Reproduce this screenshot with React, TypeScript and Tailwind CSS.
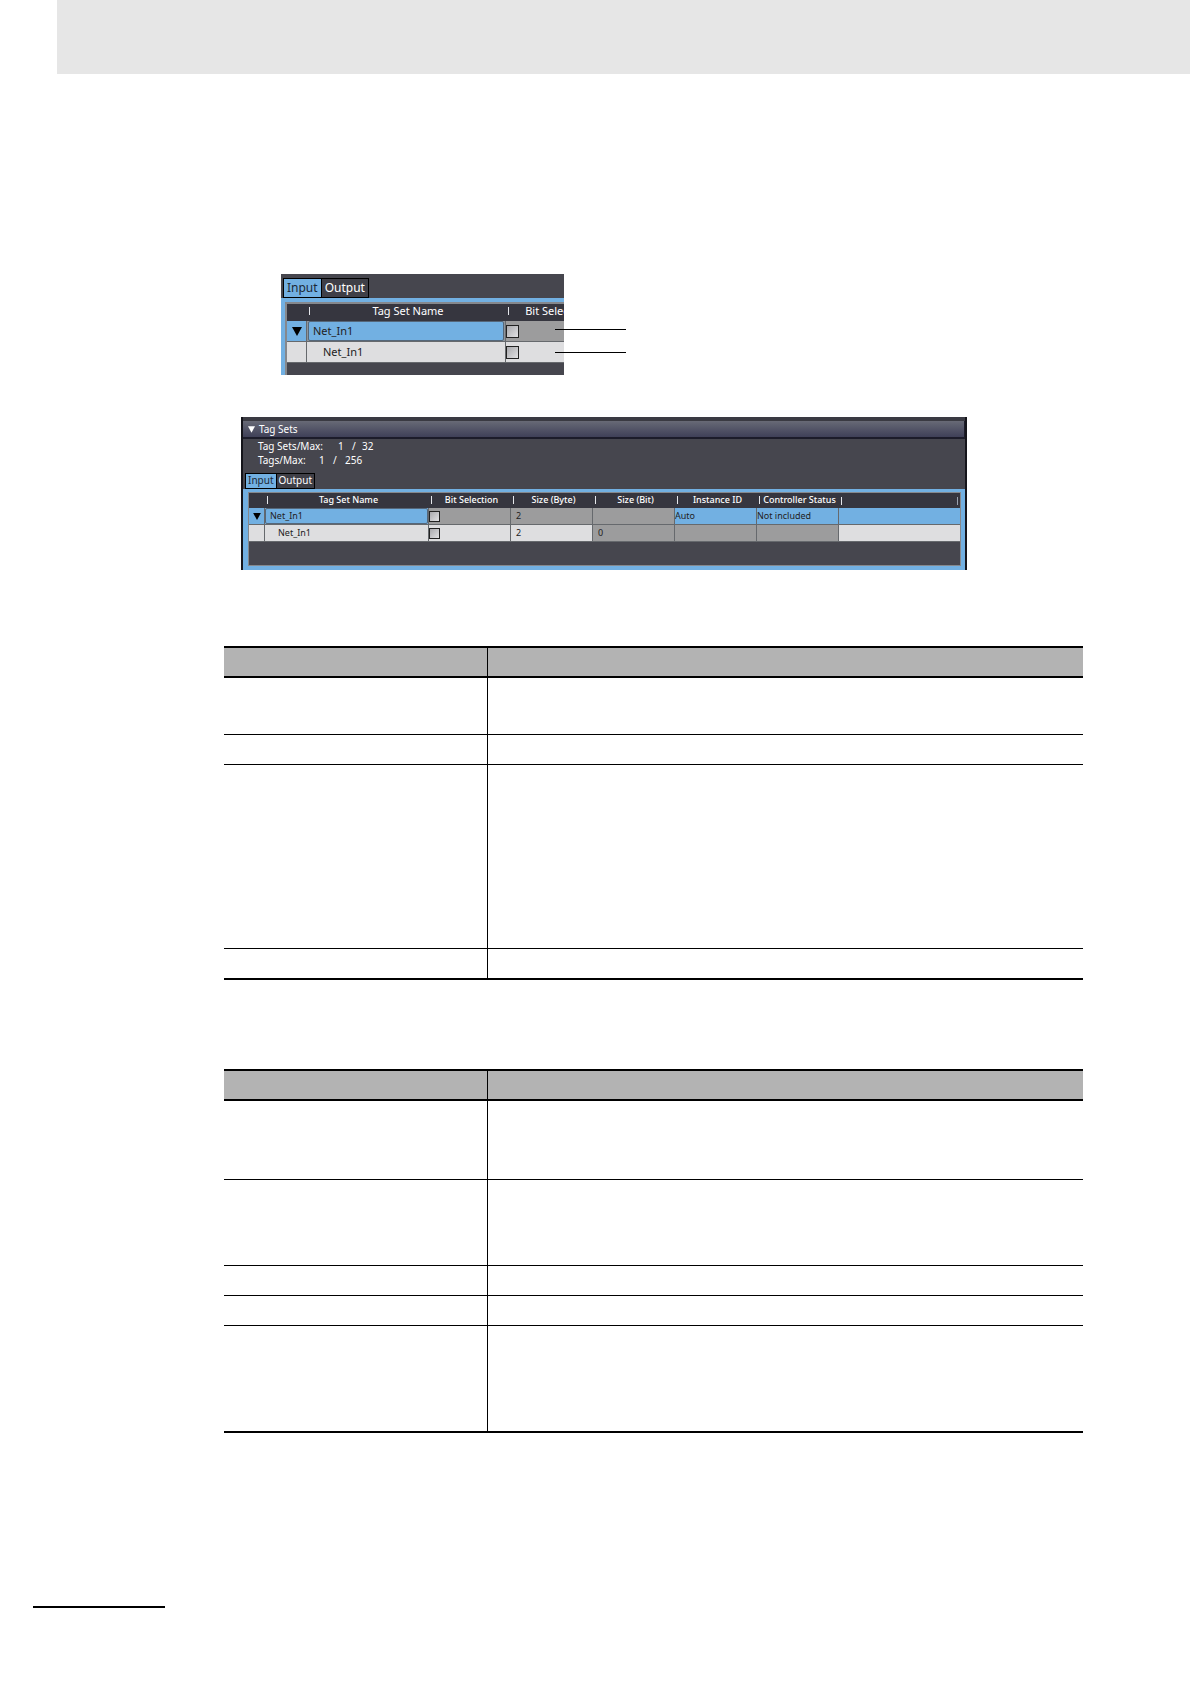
import { useState } from "react";
import clsx from "clsx";

const columns = [
  { title: "Tag Set Name", width: "w-[164px]" },
  { title: "Bit Selection", width: "w-[82px]" },
  { title: "Size (Byte)", width: "w-[82px]" },
  { title: "Size (Bit)", width: "w-[82px]" },
  { title: "Instance ID", width: "w-[82px]" },
  { title: "Controller Status", width: "w-[82px]" },
];

function Triangle({ className }: { className: string }) {
  return (
    <svg viewBox="0 0 10 9" className={className} fill="currentColor">
      <path d="M0 0h10L5 9z" />
    </svg>
  );
}

function HeaderLabel({ children }: { children?: string }) {
  return (
    <div className="flex items-center pl-0.5">
      <span className="h-2 w-px bg-gray-200" />
      <span className="flex-1 text-center whitespace-nowrap">{children}</span>
    </div>
  );
}

function Tabs({ large }: { large?: boolean }) {
  const [active, setActive] = useState("Input");
  return (
    <div className="flex">
      {["Input", "Output"].map((tab) => (
        <button
          key={tab}
          onClick={() => setActive(tab)}
          className={clsx(
            "border border-black not-first:border-l-0",
            large
              ? "h-5 px-[3px] text-[12px] leading-[18px]"
              : "flex h-4 px-0.5 text-[10px] leading-3",
            active === tab ? "bg-[#72b0e2] text-[#1c2836]" : "bg-[#3f3f47] text-white",
          )}
        >
          {tab}
        </button>
      ))}
    </div>
  );
}

function Check({ label, large }: { label: string; large?: boolean }) {
  return (
    <input
      type="checkbox"
      aria-label={label}
      className={clsx(
        "block appearance-none border border-[#222] bg-linear-to-br from-[#a9a9ad] to-[#e2e2e4]",
        large ? "size-[13px]" : "size-[11px]",
      )}
    />
  );
}

function TagDetail() {
  return (
    <div className="relative ml-[281px] h-[101px] w-[283px]">
      <div className="flex h-full flex-col overflow-hidden bg-[#46464e] pt-1">
        <div className="pl-0.5">
          <Tabs large />
        </div>
        <div className="flex-1 overflow-hidden bg-[#72b0e2] pt-1 pl-1">
          <div className="h-20 w-[322px] border-2 border-[#85888d] bg-[#46464e]">
            <table className="w-full table-fixed border-separate border-spacing-0 text-left text-[11px]">
              <thead className="bg-[#36363f] leading-3.5 text-white">
                <tr className="h-[17px]">
                  <th className="w-5 p-0" />
                  <th className="w-[199px] p-0 align-top font-normal">
                    <HeaderLabel>Tag Set Name</HeaderLabel>
                  </th>
                  <th className="p-0 align-top font-normal">
                    <HeaderLabel>Bit Selection</HeaderLabel>
                  </th>
                </tr>
              </thead>
              <tbody className="leading-[18px] text-[#222]">
                <tr className="h-[21px]">
                  <td className="border-r border-b border-[#66696d] bg-[#72b0e2] p-0">
                    <Triangle className="mx-auto h-[9px] w-2.5 text-black" />
                  </td>
                  <td className="border-r border-b border-[#66696d] bg-[#8f959b] px-px py-0">
                    <div className="h-5 rounded-xs border border-[#55677a] bg-[#72b0e2] pl-1">
                      Net_In1
                    </div>
                  </td>
                  <td className="border-b border-[#66696d] bg-[#9c9c9d] p-0">
                    <Check label="Net_In1 set bit selection" large />
                  </td>
                </tr>
                <tr className="h-[21px]">
                  <td className="border-r border-b border-[#66696d] bg-[#dedee0] p-0" />
                  <td className="border-r border-b border-[#66696d] bg-[#dedee0] py-0 pr-0 pl-4">
                    Net_In1
                  </td>
                  <td className="border-b border-[#66696d] bg-[#dedee0] p-0">
                    <Check label="Net_In1 tag bit selection" large />
                  </td>
                </tr>
              </tbody>
            </table>
          </div>
        </div>
      </div>
      {/* callout leader lines */}
      <div className="absolute top-[55px] left-[274px] h-px w-[71px] bg-black" />
      <div className="absolute top-[78px] left-[274px] h-px w-[71px] bg-black" />
    </div>
  );
}

function TagSets() {
  const cell = "border-r border-b border-[#66696d] p-0";
  return (
    <div className="mr-[223px] ml-[241px] h-[153px] border-x-2 border-[#15151b] bg-[#46464e] text-[10px] text-white">
      <div className="h-1 bg-[#3a3a42]" />
      <button className="flex h-[18px] w-full items-center gap-1 border-r border-b-2 border-[#1c1c2a] bg-linear-to-b from-[#686a76] to-[#3f4058] pl-[5px]">
        <Triangle className="h-[7px] w-[7px]" />
        Tag Sets
      </button>
      <div className="flex h-[34px] flex-col pl-[15px] leading-[14px]">
        <div className="flex">
          <span className="w-20">Tag Sets/Max:</span>
          <span className="w-3.5">1</span>
          <span className="w-2.5">/</span>
          <span>32</span>
        </div>
        <div className="flex">
          <span className="w-[61px]">Tags/Max:</span>
          <span className="w-3.5">1</span>
          <span className="w-3">/</span>
          <span>256</span>
        </div>
      </div>
      <div className="pl-0.5">
        <Tabs />
      </div>
      <div className="h-[81px] bg-[#72b0e2] pt-[3px] pr-1 pb-1 pl-[5px]">
        <div className="h-full border border-[#85888d] bg-[#46464e]">
          <table className="w-full table-fixed border-separate border-spacing-0 text-left text-[9px] leading-3.5">
            <thead className="bg-[#36363f]">
              <tr className="h-[15px]">
                <th className="w-4 p-0" />
                {columns.map((column) => (
                  <th
                    key={column.title}
                    className={clsx("p-0 align-top font-medium", column.width)}
                  >
                    <HeaderLabel>{column.title}</HeaderLabel>
                  </th>
                ))}
                <th className="p-0">
                  <div className="flex justify-between px-0.5">
                    <span className="h-2 w-px bg-gray-200" />
                    <span className="h-2 w-px bg-gray-400" />
                  </div>
                </th>
              </tr>
            </thead>
            <tbody className="text-[#222]">
              <tr className="h-[17px]">
                <td className={clsx(cell, "bg-[#72b0e2]")}>
                  <Triangle className="mx-auto h-[7px] w-2 text-black" />
                </td>
                <td className={clsx(cell, "bg-[#72b0e2]")}>
                  <div className="h-4 rounded-xs border border-[#55677a] pl-1">Net_In1</div>
                </td>
                <td className={clsx(cell, "bg-[#9c9c9d]")}>
                  <Check label="Net_In1 set bit selection, full list" />
                </td>
                <td className={clsx(cell, "bg-[#9c9c9d]")}>
                  <span className="pl-[5px]">2</span>
                </td>
                <td className={clsx(cell, "bg-[#9c9c9d]")} />
                <td className={clsx(cell, "bg-[#72b0e2]")}>Auto</td>
                <td className={clsx(cell, "bg-[#72b0e2]")}>Not included</td>
                <td className="border-b border-[#66696d] bg-[#72b0e2] p-0" />
              </tr>
              <tr className="h-[17px]">
                <td className={clsx(cell, "bg-[#dedee0]")} />
                <td className={clsx(cell, "bg-[#dedee0]")}>
                  <span className="pl-[13px]">Net_In1</span>
                </td>
                <td className={clsx(cell, "bg-[#dedee0]")}>
                  <Check label="Net_In1 tag bit selection, full list" />
                </td>
                <td className={clsx(cell, "bg-[#dedee0]")}>
                  <span className="pl-[5px]">2</span>
                </td>
                <td className={clsx(cell, "bg-[#9c9c9d]")}>
                  <span className="pl-[5px]">0</span>
                </td>
                <td className={clsx(cell, "bg-[#9c9c9d]")} />
                <td className={clsx(cell, "bg-[#9c9c9d]")} />
                <td className="border-b border-[#66696d] bg-[#dedee0] p-0" />
              </tr>
            </tbody>
          </table>
        </div>
      </div>
    </div>
  );
}

function DescriptionTable({ rows }: { rows: string[] }) {
  return (
    <table className="w-full table-fixed border-separate border-spacing-0">
      <thead>
        <tr className="h-8 bg-[#b3b3b3]">
          <th className="w-[264px] border-y-2 border-r border-black p-0" />
          <th className="border-y-2 border-black p-0" />
        </tr>
      </thead>
      <tbody>
        {rows.map((height, i) => {
          const line = i === rows.length - 1 ? "border-b-2" : "border-b";
          return (
            <tr key={i} className={height}>
              <td className={clsx("border-r border-black p-0", line)} />
              <td className={clsx("border-black p-0", line)} />
            </tr>
          );
        })}
      </tbody>
    </table>
  );
}

export default function App() {
  return (
    <div className="min-h-screen bg-white font-['Noto_Sans',sans-serif]">
      <header className="ml-[57px] h-[74px] bg-[#e6e6e6]" />
      <main className="pt-[200px]">
        <TagDetail />
        <div className="pt-[42px]">
          <TagSets />
        </div>
        <div className="mr-[107px] ml-56 flex flex-col gap-[89px] pt-19">
          <DescriptionTable rows={["h-[57px]", "h-[30px]", "h-[184px]", "h-[31px]"]} />
          <DescriptionTable
            rows={["h-[79px]", "h-[86px]", "h-[30px]", "h-[30px]", "h-[107px]"]}
          />
        </div>
      </main>
      <footer className="pt-[173px] pl-[33px]">
        <div className="h-0.5 w-33 bg-black" />
      </footer>
    </div>
  );
}
